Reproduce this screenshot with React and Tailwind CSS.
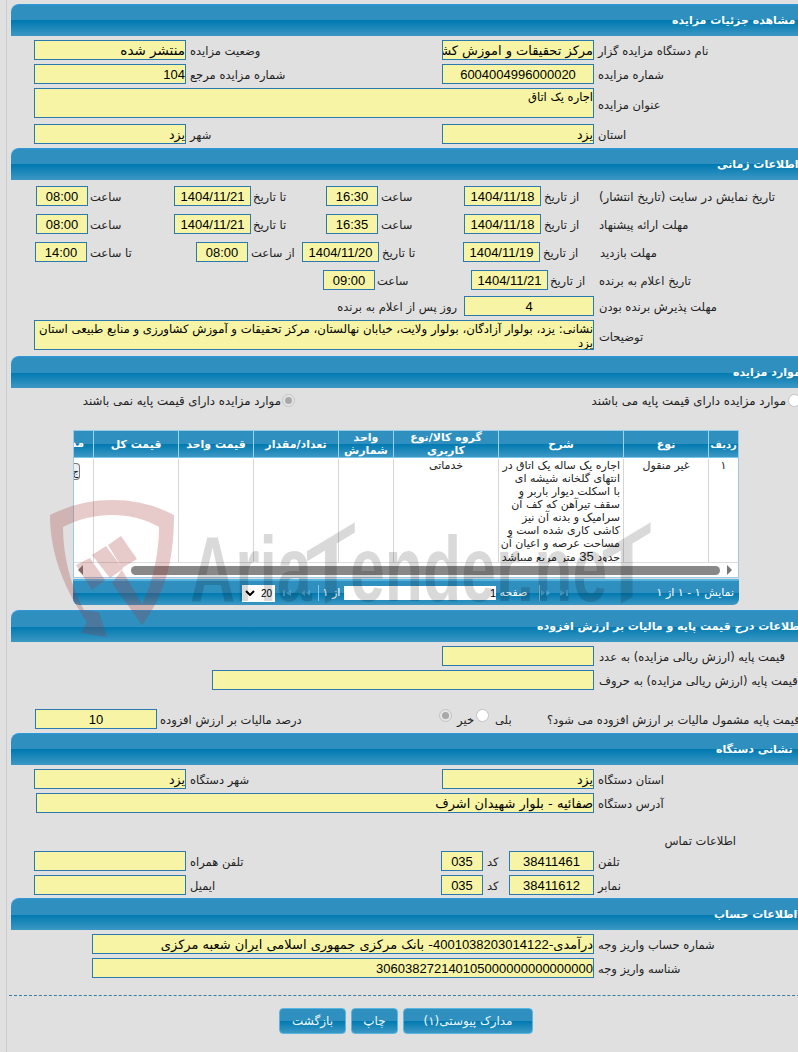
const blueBar = "bg-[linear-gradient(#2f90c0_0%,#2f90c0_50%,#0079b0_50%,#3c98c4_100%)]";

function Field({ className = "", size = "text-[12.5px]", latin, center, children }) {
  return (
    <div
      className={`h-5 shrink-0 border border-[#2a7ab0] bg-[#f7f5a5] text-black whitespace-nowrap overflow-hidden leading-[19px] ${latin ? "font-['Liberation_Sans',sans-serif] text-[13px]" : size} ${center ? "text-center" : "text-right"} ${className}`}
    >
      {children}
    </div>
  );
}

function Label({ className = "", children }) {
  return <div className={`h-5 shrink-0 text-[11.5px] leading-5 pt-[1px] text-[#222] whitespace-nowrap text-left ${className}`}>{children}</div>;
}

function Latin({ children }) {
  return <span className="font-['Liberation_Sans',sans-serif] text-[13px]">{children}</span>;
}

function Radio({ checked, className = "" }) {
  return (
    <div className={`w-[13px] h-[13px] shrink-0 rounded-full border border-[#c4c4c4] flex items-center justify-center ${checked ? "bg-[#e4e4e4]" : "bg-white"} ${className}`}>
      {checked && <div className="w-[7px] h-[7px] rounded-full bg-[#a8a8a8]" />}
    </div>
  );
}

function SectionBar({ title, className = "" }) {
  return (
    <div className={`h-8 ml-[11px] rounded-tl-lg overflow-hidden border-t border-[#2f97dc] ${blueBar} flex items-center`}>
      <div className={`w-full mt-[1px] text-left text-[11px] font-bold text-white whitespace-nowrap ${className}`}>{title}</div>
    </div>
  );
}

function Row({ className = "", children }) {
  return <div className={`flex items-start ${className}`}>{children}</div>;
}

function DetailsSection() {
  return (
    <>
      <SectionBar title="مشاهده جزئیات مزایده" className="pl-[661px]" />
      <Row className="mt-1">
        <Label className="w-[236px] pl-1">نام دستگاه مزایده گزار</Label>
        <Field className="w-[152px]" size="text-[13px]">مرکز تحقیقات و اموزش کشاورزی</Field>
        <Label className="w-[256px] pl-1">وضعیت مزایده</Label>
        <Field className="w-[152px]" size="text-[13.5px]">منتشر شده</Field>
      </Row>
      <Row className="mt-1">
        <Label className="w-[236px] pl-1">شماره مزایده</Label>
        <Field className="w-[152px]" latin center>6004004996000020</Field>
        <Label className="w-[256px] pl-1">شماره مزایده مرجع</Label>
        <Field className="w-[152px]" latin>104</Field>
      </Row>
      <Row className="mt-1">
        <Label className="w-[236px] pl-1 pt-[7px]">عنوان مزایده</Label>
        <Field className="w-[560px] !h-[30px] !leading-[17px]" size="text-[11.5px]">اجاره یک اتاق</Field>
      </Row>
      <Row className="mt-[6px]">
        <Label className="w-[236px] pl-1">استان</Label>
        <Field className="w-[152px]">یزد</Field>
        <Label className="w-[256px] pl-1">شهر</Label>
        <Field className="w-[152px]">یزد</Field>
      </Row>
    </>
  );
}

function TimeSection() {
  return (
    <div className="mt-1">
      <SectionBar title="اطلاعات زمانی" className="pl-[706px]" />
      <Row className="mt-[6px]">
        <Label className="w-[232px] pl-[1px] !text-[11.8px]">تاریخ نمایش در سایت (تاریخ انتشار)</Label>
        <Label className="w-[57px] pl-[3px]">از تاریخ</Label>
        <Field className="w-[77px]" latin center>1404/11/18</Field>
        <Label className="w-[86px] pl-[3px]">ساعت</Label>
        <Field className="w-[52px]" latin center>16:30</Field>
        <Label className="w-[75px] pl-[2px]">تا تاریخ</Label>
        <Field className="w-[77px]" latin center>1404/11/21</Field>
        <Label className="w-[86px] pl-[2px]">ساعت</Label>
        <Field className="w-[52px]" latin center>08:00</Field>
      </Row>
      <Row className="mt-2">
        <Label className="w-[232px] pl-[1px]">مهلت ارائه پیشنهاد</Label>
        <Label className="w-[57px] pl-[3px]">از تاریخ</Label>
        <Field className="w-[77px]" latin center>1404/11/18</Field>
        <Label className="w-[86px] pl-[3px]">ساعت</Label>
        <Field className="w-[52px]" latin center>16:35</Field>
        <Label className="w-[75px] pl-[2px]">تا تاریخ</Label>
        <Field className="w-[77px]" latin center>1404/11/21</Field>
        <Label className="w-[86px] pl-[2px]">ساعت</Label>
        <Field className="w-[52px]" latin center>08:00</Field>
      </Row>
      <Row className="mt-2">
        <Label className="w-[232px] pl-[2px]">مهلت بازدید</Label>
        <Label className="w-[58px] pl-[3px]">از تاریخ</Label>
        <Field className="w-[77px]" latin center>1404/11/19</Field>
        <Label className="w-[84px] pl-[3px]">تا تاریخ</Label>
        <Field className="w-[77px]" latin center>1404/11/20</Field>
        <Label className="w-[54px] pl-[3px]">از ساعت</Label>
        <Field className="w-[52px]" latin center>08:00</Field>
        <Label className="w-[109px] pl-[3px]">تا ساعت</Label>
        <Field className="w-[52px]" latin center>14:00</Field>
      </Row>
      <Row className="mt-2">
        <Label className="w-[232px] pl-[1px]">تاریخ اعلام به برنده</Label>
        <Label className="w-[50px] pl-[2px]">از تاریخ</Label>
        <Field className="w-[77px]" latin center>1404/11/21</Field>
        <Label className="w-[96px] pl-[2px]">ساعت</Label>
        <Field className="w-[52px]" latin center>09:00</Field>
      </Row>
      <Row className="mt-[6px]">
        <Label className="w-[236px] pl-[5px]">مهلت پذیرش برنده بودن</Label>
        <Field className="w-[130px]" latin center>4</Field>
        <Label className="pr-[7px] !text-right">روز پس از اعلام به برنده</Label>
      </Row>
      <Row className="mt-1">
        <Label className="w-[236px] pl-[5px] pt-[7px]">توضیحات</Label>
        <Field className="w-[560px] !h-[30px] !leading-[14px] pt-[1px]" size="text-[11.7px]">
          نشانی: یزد، بولوار آزادگان، بولوار ولایت، خیابان نهالستان، مرکز تحقیقات و آموزش کشاورزی و منابع طبیعی استان
          <br />
          یزد
        </Field>
      </Row>
    </div>
  );
}

const columns = [
  { name: "ردیف", w: "w-[30px]", size: "text-[10px]" },
  { name: "نوع", w: "w-[85px]", size: "text-[11px]" },
  { name: "شرح", w: "w-[125px]", size: "text-[11px]" },
  { name: "گروه کالا/نوع کاربری", w: "w-[105px]", size: "text-[11px]" },
  { name: "واحد شمارش", w: "w-[55px]", size: "text-[11px]" },
  { name: "تعداد/مقدار", w: "w-[85px]", size: "text-[11px]" },
  { name: "قیمت واحد", w: "w-[75px]", size: "text-[11px]" },
  { name: "قیمت کل", w: "w-[85px]", size: "text-[11px]" },
];

const descLines = [
  "اجاره یک ساله یک اتاق در",
  "انتهای گلخانه شیشه ای",
  "با اسکلت دیوار باربر و",
  "سقف تیرآهن که کف آن",
  "سرامیک و بدنه آن نیز",
  "کاشی کاری شده است و",
  "مساحت عرصه و اعیان آن",
];

function NavIcon({ flip, double }) {
  return (
    <svg width="12" height="8" viewBox="0 0 12 8" className={`shrink-0 ${flip ? "-scale-x-100" : ""}`}>
      {double ? (
        <path d="M1 1l4 3-4 3zM6 1l4 3-4 3z" fill="#4ea8d4" />
      ) : (
        <path d="M2 1l5 3-5 3zM8 1h2v6H8z" fill="#4ea8d4" />
      )}
    </svg>
  );
}

function ItemsTable() {
  return (
    <div className="mt-5 mr-[91px] w-[666px]">
      <div className="border border-[#9cc9e6] bg-white">
        <div className={`flex h-[27px] ${blueBar} border-b border-[#7cc6ea]`}>
          {columns.map((c) => (
            <div key={c.name} className={`${c.w} ${c.size} shrink-0 border-l border-[#9ad4f0] text-white font-bold leading-[13px] text-center flex items-center justify-center`}>
              {c.name}
            </div>
          ))}
          <div className="w-[19px] overflow-hidden text-white font-bold text-[11px] leading-[26px] whitespace-nowrap text-right pr-[9px]">مدارک</div>
        </div>
        <div className="flex h-[104px] text-[11px] leading-[13px] text-[#222] text-center pt-[1px]">
          <div className="w-[30px] shrink-0 border-l border-[#d6d6d6]">۱</div>
          <div className="w-[85px] shrink-0 border-l border-[#d6d6d6]">غیر منقول</div>
          <div className="w-[125px] shrink-0 border-l border-[#d6d6d6] text-right pr-[3px] whitespace-nowrap overflow-hidden">
            {descLines.map((line) => (
              <div key={line}>{line}</div>
            ))}
            <div>حدود <Latin>35</Latin> متر مربع میباشد</div>
          </div>
          <div className="w-[105px] shrink-0 border-l border-[#d6d6d6]">خدماتی</div>
          <div className="w-[55px] shrink-0 border-l border-[#d6d6d6]" />
          <div className="w-[85px] shrink-0 border-l border-[#d6d6d6]" />
          <div className="w-[75px] shrink-0 border-l border-[#d6d6d6]" />
          <div className="w-[85px] shrink-0 border-l border-[#d6d6d6]" />
          <div className="w-[19px] overflow-hidden">
            <div className="mt-[4px] mr-[13px] w-[6px] h-[17px] rounded-r-sm border border-l-0 border-[#777] bg-[#eee] text-[10px] leading-[15px] overflow-hidden">ج</div>
          </div>
        </div>
        <div className="h-[15px] border-t border-[#ddd] flex items-center">
          <div className="w-0 h-0 mr-[6px] border-y-[5px] border-y-transparent border-l-[5px] border-l-[#777]" />
          <div className="h-[9px] w-[589px] mr-[7px] rounded-full bg-[#888]" />
          <div className="w-0 h-0 mr-[48px] border-y-[5px] border-y-transparent border-r-[5px] border-r-[#777]" />
        </div>
      </div>
      <div className={`h-[26px] mt-[1px] rounded-b-md ${blueBar} border-t-2 border-[#56b4e0] flex items-center text-white text-[11px]`}>
        <span className="w-[169px] pr-[5px] whitespace-nowrap">نمایش ۱ - ۱ از ۱</span>
        <span className="w-[30px] flex items-center gap-[6px]">
          <NavIcon />
          <NavIcon double />
        </span>
        <span className="w-[9px] h-4 border-r border-[#7cc6ea]" />
        <span className="w-[35px] whitespace-nowrap text-center">صفحه</span>
        <span className="w-[152px] h-[14px] bg-white text-black leading-[14px] text-right font-['Liberation_Sans',sans-serif]">1</span>
        <span className="w-[25px] text-center whitespace-nowrap">از ۱</span>
        <span className="w-[8px] h-4 border-r border-[#7cc6ea]" />
        <span className="w-[36px] flex items-center gap-[6px]">
          <NavIcon flip double />
          <NavIcon flip />
        </span>
        <span className="w-[33px] h-[17px] bg-white text-black text-[10px] flex items-center justify-between px-[3px]">
          <span className="font-['Liberation_Sans',sans-serif]">20</span>
          <svg width="10" height="6" viewBox="0 0 10 6">
            <path d="M1 1l4 4 4-4" fill="none" stroke="#000" strokeWidth="2" />
          </svg>
        </span>
      </div>
    </div>
  );
}

function ItemsSection() {
  return (
    <div className="mt-[6px]">
      <SectionBar title="موارد مزایده" className="pl-[722px]" />
      <div className="flex mt-[2px] h-5 items-center">
        <Radio className="mr-[29px]" />
        <Label className="w-[493px] !text-right pr-[2px] !text-[11.8px]">موارد مزایده دارای قیمت پایه می باشند</Label>
        <Radio checked />
        <Label className="!text-right pr-[1px] !text-[11.8px]">موارد مزایده دارای قیمت پایه نمی باشند</Label>
      </div>
      <ItemsTable />
    </div>
  );
}

function PriceSection() {
  return (
    <div className="mt-[5px]">
      <SectionBar title="اطلاعات درج قیمت پایه و مالیات بر ارزش افزوده" className="pl-[526px]" />
      <Row className="mt-1">
        <Label className="w-[236px] pl-[5px]">قیمت پایه (ارزش ریالی مزایده) به عدد</Label>
        <Field className="w-[152px]" />
      </Row>
      <Row className="mt-1">
        <Label className="w-[236px] pl-[5px]">قیمت پایه (ارزش ریالی مزایده) به حروف</Label>
        <Field className="w-[382px]" />
      </Row>
      <Row className="mt-[19px] items-center">
        <Label className="w-[283px]">قیمت پایه مشمول مالیات بر ارزش افزوده می شود؟</Label>
        <Label className="w-[58px] pl-[6px]">بلی</Label>
        <Radio />
        <Label className="w-[24px] !text-right pr-[2px]">خیر</Label>
        <Radio checked />
        <Label className="w-[282px] pl-[3px]">درصد مالیات بر ارزش افزوده</Label>
        <Field className="w-[122px]" latin center>10</Field>
      </Row>
    </div>
  );
}

function DeviceSection() {
  return (
    <div className="mt-1">
      <SectionBar title="نشانی دستگاه" className="pl-[705px]" />
      <Row className="mt-1">
        <Label className="w-[236px] pl-1">استان دستگاه</Label>
        <Field className="w-[152px]">یزد</Field>
        <Label className="w-[256px] pl-1">شهر دستگاه</Label>
        <Field className="w-[152px]">یزد</Field>
      </Row>
      <Row className="mt-1">
        <Label className="w-[236px] pl-1">آدرس دستگاه</Label>
        <Field className="w-[558px]" size="text-[13px]">صفائیه - بلوار شهیدان اشرف</Field>
      </Row>
      <Row className="mt-[17px]">
        <Label className="mr-[94px] !text-right">اطلاعات تماس</Label>
      </Row>
      <Row className="mt-[1px]">
        <Label className="w-[236px] pl-1">تلفن</Label>
        <Field className="w-[85px]" latin center>38411461</Field>
        <Label className="w-[26px] pl-1">کد</Label>
        <Field className="w-[42px]" latin center>035</Field>
        <Label className="w-[255px] pl-1">تلفن همراه</Label>
        <Field className="w-[152px]" />
      </Row>
      <Row className="mt-1">
        <Label className="w-[236px] pl-1">نمابر</Label>
        <Field className="w-[85px]" latin center>38411612</Field>
        <Label className="w-[26px] pl-1">کد</Label>
        <Field className="w-[42px]" latin center>035</Field>
        <Label className="w-[255px] pl-1">ایمیل</Label>
        <Field className="w-[152px]" />
      </Row>
    </div>
  );
}

function AccountSection() {
  return (
    <div className="mt-[3px]">
      <SectionBar title="اطلاعات حساب" className="pl-[703px]" />
      <Row className="mt-1">
        <Label className="w-[236px] pl-1">شماره حساب واریز وجه</Label>
        <Field className="w-[502px]" size="text-[13px]">درآمدی-<Latin>4001038203014122</Latin>- بانک مرکزی جمهوری اسلامی ایران شعبه مرکزی</Field>
      </Row>
      <Row className="mt-1">
        <Label className="w-[236px] pl-1">شناسه واریز وجه</Label>
        <Field className="w-[502px]" latin>306038272140105000000000000000</Field>
      </Row>
    </div>
  );
}

function ActionButton({ className = "", children }) {
  return (
    <button className={`h-[26px] shrink-0 rounded border border-[#59b6e0] ${blueBar} text-[#eef7fb] text-[12px] ${className}`}>
      {children}
    </button>
  );
}

function Watermark() {
  return (
    <div className="absolute left-0 top-0 w-[798px] h-[1052px] pointer-events-none overflow-hidden" dir="ltr">
      <svg width="798" height="1052" viewBox="0 0 798 1052" className="absolute left-0 top-0">
        <g fill="#a03030" fillOpacity="0.25">
          <path d="M50 515C70 505 90 500 112 500C135 500 155 505 174 515C174 560 165 595 142 625L112 583L122 570L142 604C152 585 159 555 159 527C145 519 130 515 112 515C95 515 78 519 63 527C63 555 70 585 84 610L99 612L107 637L81 633L87 622C65 590 50 555 50 515Z" />
          <path d="M108 545L121 536L137 559L122 568Z" />
          <path d="M92 555L106 546L123 569L110 578Z" />
          <path d="M76 565L90 558L105 580L92 590Z" />
        </g>
      </svg>
      <div className="absolute left-[190px] top-[523px] origin-top-left scale-x-[0.68] text-[92px] leading-[92px] font-bold text-black/15 whitespace-nowrap font-['Liberation_Sans',sans-serif]">
        Aria<span className="inline-block -skew-y-[28deg] scale-x-[1.3]">T</span>ender.ne<span className="inline-block -skew-y-[28deg] scale-x-[1.3]">T</span>
      </div>
    </div>
  );
}

export default function App() {
  return (
    <div className="relative w-[798px] h-[1052px] overflow-hidden bg-[#e0e0e0] font-['DejaVu_Sans',sans-serif]">
      <div className="absolute left-[6px] top-0 bottom-0 w-[1px] bg-[#ccc]" />
      <div dir="rtl" className="w-[830px] pt-1">
        <DetailsSection />
        <TimeSection />
        <ItemsSection />
        <PriceSection />
        <DeviceSection />
        <AccountSection />
        <div className="mt-[17px] ml-[9px] border-t border-dashed border-[#3a7ca8]" />
        <div className="flex gap-[5px] mt-3 mr-[297px]">
          <ActionButton className="w-[130px]">مدارک پیوستی(۱)</ActionButton>
          <ActionButton className="w-[47px]">چاپ</ActionButton>
          <ActionButton className="w-[67px]">بازگشت</ActionButton>
        </div>
      </div>
      <Watermark />
    </div>
  );
}
